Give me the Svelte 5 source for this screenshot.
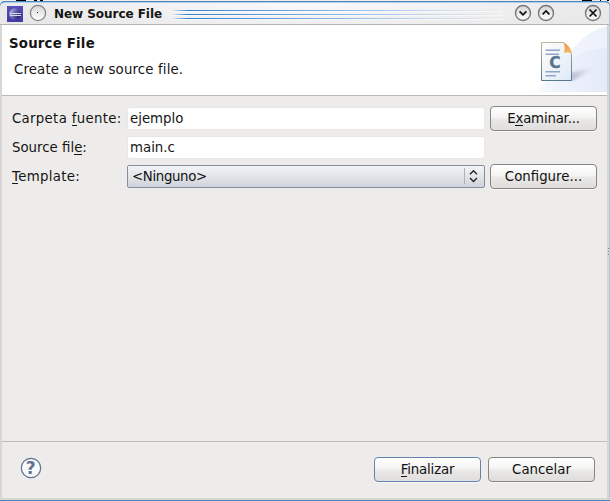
<script>
  let folder = $state('ejemplo');
  let file = $state('main.c');
</script>

<div class="screen">
  <div class="strip"><i style="width:10px;margin-left:16px"></i><i style="width:3px;margin-left:8px"></i><i style="width:3px;margin-left:3px"></i><i style="width:10px;margin-left:539px"></i><i style="width:1px;margin-left:8px"></i><i style="width:2px;margin-left:6px"></i></div>
  <div class="window">
    <header class="titlebar">
      <svg class="logo" width="16" height="16" viewBox="0 0 16 16">
        <defs>
          <linearGradient id="tile" x2="0" y2="1"><stop stop-color="#5b50bb" /><stop offset="1" stop-color="#4438a4" /></linearGradient>
          <linearGradient id="ball" x2="1" y2=".5"><stop stop-color="#d6cfec" /><stop offset=".45" stop-color="#7577bb" /><stop offset="1" stop-color="#28246c" /></linearGradient>
        </defs>
        <rect width="16" height="16" fill="url(#tile)" />
        <circle cx="8" cy="8" r="5.800" fill="url(#ball)" />
        <path d="M3 7.500H14M3 9.500H14" stroke="#d3d8f4" stroke-width="1" />
      </svg>
      <svg class="round menu" width="18" height="18" viewBox="0 0 18 18">
        <defs><linearGradient id="knob" x2="0" y2="1"><stop stop-color="#d5d5d5" /><stop offset="1" stop-color="#fff" /></linearGradient></defs>
        <circle cx="9" cy="9" r="7.600" fill="url(#knob)" stroke="#858585" stroke-width="1.300" /><rect x="8" y="8" width="1" height="1" fill="#222" />
      </svg>
      <strong>New Source File</strong>
      <span class="stripes"><b></b><b></b><b></b></span>
      <svg class="round down" width="18" height="18" viewBox="0 0 18 18"><circle cx="9" cy="9" r="7.500" fill="url(#knob)" stroke="#777" stroke-width="1.400" /><path d="M5.600 7.400 9 10.800 12.400 7.400" /></svg>
      <svg class="round up" width="18" height="18" viewBox="0 0 18 18"><circle cx="9" cy="9" r="7.500" fill="url(#knob)" stroke="#777" stroke-width="1.400" /><path d="M5.600 10.300 9 6.900 12.400 10.300" /></svg>
      <svg class="round close" width="18" height="18" viewBox="0 0 18 18"><circle cx="9" cy="9" r="7.500" fill="url(#knob)" stroke="#777" stroke-width="1.400" /><path d="M5.500 5.500 12.500 12.500M12.500 5.500 5.500 12.500" /></svg>
    </header>

    <section class="banner">
      <div class="heading"><h1>Source File</h1><p>Create a new source file.</p></div>
      <svg class="art" width="75" height="66" viewBox="0 0 75 66">
        <defs>
          <linearGradient id="sky"><stop stop-color="#dfe7f7" stop-opacity="0" /><stop offset=".6" stop-color="#e8edfa" /><stop offset="1" stop-color="#dfe7f8" /></linearGradient>
          <linearGradient id="paper" x2="1" y2="1"><stop stop-color="#fffef9" /><stop offset="1" stop-color="#dfeaf8" /></linearGradient>
          <linearGradient id="edge" x2="0" y2="1"><stop stop-color="#b9b7a0" /><stop offset="1" stop-color="#56788d" /></linearGradient>
          <linearGradient id="shade"><stop stop-color="#9a98b8" stop-opacity=".65" /><stop offset="1" stop-color="#c5c9e3" stop-opacity="0" /></linearGradient>
          <linearGradient id="fold" x2="1" y2="1"><stop stop-color="#ee9330" /><stop offset="1" stop-color="#f7bd76" /></linearGradient>
          <filter id="soft"><feGaussianBlur stdDeviation="1.500" /></filter>
        </defs>
        <path d="M0 66Q26 50 38 27Q52 6 75 0V66Z" fill="url(#sky)" opacity=".6" />
        <path d="M0 66Q24 48 40 33Q56 22 75 22V66Z" fill="url(#sky)" opacity=".65" />
        <path d="M39 54V47Q50 43 64 41Q54 48 40 55Z" fill="url(#shade)" filter="url(#soft)" />
        <path d="M9.500 16.500H31Q37 20 39.500 27V54.500H9.500Z" fill="url(#paper)" stroke="url(#edge)" />
        <path d="M31 16Q39 20 40 28Q37 25 32 27Q34 21 31 16Z" fill="url(#fold)" />
        <path d="M13.500 24.300H28M13.500 28.300H27M13.500 45.800H28M13.500 49.800H24" stroke="#91a5c7" stroke-width="1.400" />
        <text x="17.200" y="42.300">C</text>
      </svg>
    </section>

    <main>
      <div class="row">
        <label class="wide" for="folder">Carpeta <u>f</u>uente:</label>
        <input id="folder" bind:value={folder} /><button class="browse">E<u>x</u>aminar...</button>
      </div>
      <div class="row">
        <label for="file">Source fil<u>e</u>:</label>
        <input id="file" bind:value={file} />
      </div>
      <div class="row">
        <label class="wide" for="template"><u>T</u>emplate:</label>
        <button id="template" class="combo"><span>&lt;Ninguno&gt;</span><svg width="20" height="20" viewBox="0 0 20 20"><path d="M.5 2V18" stroke="#aeb1b5" /><path d="M6 8.200 9.500 4.700 13 8.200M6 12 9.500 15.500 13 12" fill="none" stroke="#222" stroke-width="1.400" /></svg></button><button>Configure...</button>
      </div>
    </main>

    <footer>
      <svg class="help" width="22" height="22" viewBox="0 0 22 22"><circle cx="11" cy="11" r="9.700" fill="#f8f9fb" stroke="#62718f" stroke-width="1.200" /><text x="5.800" y="17">?</text></svg>
      <button class="finish"><u>F</u>inalizar</button>
      <button>Cancelar</button>
    </footer>
    <span class="grip"><i></i><i></i><i></i></span>
  </div>
</div>

<style>
  * { box-sizing: border-box; }
  .screen { width: 610px; height: 501px; overflow: hidden; background: #ededed; font: 13.333px "DejaVu Sans", sans-serif; color: #151515; }
  .strip { height: 1px; display: flex; background: #f0eeec; }
  .strip i { height: 1px; background: #000; flex: none; }
  .window { position: relative; height: 500px; display: flex; flex-direction: column; border: solid #d6d6d5; border-width: 0 3px 3px 2px; background: #edecea; border-radius: 5px 5px 0 0; }
  .window::before { content: ""; position: absolute; inset: 0 -3px -3px -2px; border: solid #4e88bb; border-width: 1px 0; border-radius: 5px 5px 0 0; pointer-events: none; }
  .window::after { content: ""; position: absolute; right: -3px; top: 5px; bottom: -2px; width: 1px; background: #b2cae6; }
  .titlebar { height: 24px; flex: none; margin: 0 -3px 0 -2px; padding: 0 7px; display: flex; align-items: center; border-top: 1px solid #4e88bb; border-bottom: 1px solid #b5b5b5; border-radius: 5px 5px 0 0; background: radial-gradient(ellipse 330px 35px at 50% 0, #fafafa, #e8e8e8); box-shadow: inset 0 1px #acd0ef; }
  .logo { flex: none; margin-top: 1px; }
  .round { flex: none; }
  .round path { fill: none; stroke: #111; stroke-width: 1.700; }
  .menu { margin-left: 6px; }
  .titlebar strong { margin-left: 7px; margin-top: 2px; width: 109px; font-size: 12px; line-height: 18px; letter-spacing: -.05px; white-space: nowrap; }
  .stripes { margin: 2px 0 0 8px; width: 332px; display: flex; flex-direction: column; gap: 3px; }
  .stripes b { height: 1px; background: linear-gradient(90deg, #3580d400, #3580d4 5%, #69a3df 35%, #aac8eb 65%, #c8d8ed00); box-shadow: 0 1px #fff8; }
  .down { margin-left: 11px; }
  .up { margin-left: 5px; }
  .close { margin-left: 29px; }
  .banner { height: 71px; flex: none; display: flex; justify-content: space-between; background: #fff; border-bottom: 1px solid #b8b7b5; }
  .heading { padding: 10px 0 0 7px; }
  h1 { margin: 0; font-size: 13.333px; line-height: 17px; letter-spacing: .2px; white-space: nowrap; }
  p { margin: 9px 0 0 5px; line-height: 17px; letter-spacing: .14px; white-space: nowrap; }
  .art { margin-top: 1px; }
  .art text { font: bold 15.500px "DejaVu Sans", sans-serif; fill: #56738f; stroke: #56738f; stroke-width: .3px; }
  main { flex: 1; padding: 10px 10px 0; }
  .row { display: flex; align-items: center; height: 25px; margin-bottom: 4px; }
  label { width: 115px; flex: none; line-height: 17px; white-space: nowrap; }
  .wide { letter-spacing: .3px; }
  u { text-decoration: none; box-shadow: inset 0 -1px #151515; }
  input { width: 358px; height: 23px; padding: 0 2px 1px; border: 1px solid #e8e7e5; border-radius: 3px; background: #fff; font: inherit; color: inherit; outline: 0; }
  button { width: 107px; height: 25px; flex: none; padding: 0 0 1px; border: 1px solid #858583; border-radius: 4px; background: linear-gradient(#fff, #f4f4f3 45%, #e9e8e7 55%, #dfdedc); color: #111; font: inherit; line-height: 17px; box-shadow: 0 1px #f9f8f7; }
  .row > input + button, .combo + button { margin-left: 5px; }
  .browse { letter-spacing: -.2px; }
  .combo { width: 358px; height: 23px; display: flex; align-items: center; justify-content: space-between; padding: 0 0 1px 4px; border-color: #8290a0; border-radius: 2px; background: linear-gradient(#f3f5f8, #e1e4e8 50%, #cfd3da); box-shadow: none; letter-spacing: -.35px; }
  footer { height: 57px; flex: none; border-top: 1px solid #bdbcba; padding: 15px 12px 0 18px; display: flex; align-items: flex-start; }
  footer button + button { margin-left: 7px; }
  .help { margin: 0 auto 0 0; }
  .help text { font: bold 17px "DejaVu Sans", sans-serif; fill: #62718f; }
  .finish { border-color: #6382ad; letter-spacing: -.15px; }
  .grip { position: absolute; right: -2px; top: 247px; display: flex; flex-direction: column; gap: 2px; }
  .grip i { width: 1px; height: 1px; background: #8c8c8c; }
</style>
